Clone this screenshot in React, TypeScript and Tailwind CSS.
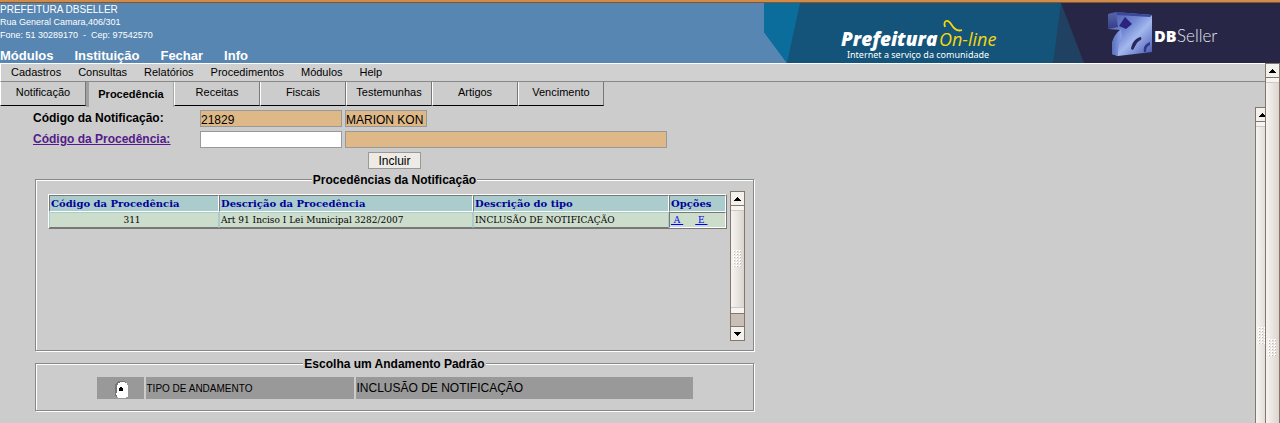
import React from "react";

const SANS = "font-['Liberation_Sans',Arial,sans-serif]";

const mainLinks = ["Módulos", "Instituição", "Fechar", "Info"];
const menuItems = ["Cadastros", "Consultas", "Relatórios", "Procedimentos", "Módulos", "Help"];
const tabs = ["Notificação", "Procedência", "Receitas", "Fiscais", "Testemunhas", "Artigos", "Vencimento"];

function Banner() {
  return (
    <svg className="block h-[60px] w-[516px] shrink-0" viewBox="0 0 516 60" role="img" aria-label="Prefeitura On-line, DBSeller">
      <defs>
        <linearGradient id="face" x1="0" y1="0" x2="1" y2="1">
          <stop offset="0" stopColor="#4453a6" />
          <stop offset="0.4" stopColor="#7289d2" />
          <stop offset="0.6" stopColor="#a3b8ee" />
          <stop offset="1" stopColor="#4355ad" />
        </linearGradient>
        <linearGradient id="side" x1="0" y1="0" x2="0" y2="1">
          <stop offset="0" stopColor="#5563ab" />
          <stop offset="1" stopColor="#343d85" />
        </linearGradient>
        <linearGradient id="foot" x1="0" y1="0" x2="1" y2="0">
          <stop offset="0" stopColor="#5a6fc0" />
          <stop offset="1" stopColor="#8ea4e4" />
        </linearGradient>
      </defs>
      <path d="M0 0H516V60H23L0 29Z" fill="#14547a" />
      <path d="M0 0H36L23 60L0 29Z" fill="#0a6d9c" />
      <path d="M297 0H516V60H289Z" fill="#204161" />
      <path d="M297 0H516V60H320Z" fill="#272646" />
      <text x="77" y="43" fontFamily="'Open Sans','Noto Sans',sans-serif" fontSize="19" fontWeight="800" fontStyle="italic" fill="#fff">Prefeitura</text>
      <text x="175" y="43" fontFamily="'Open Sans',sans-serif" fontSize="18" fontStyle="italic" fill="#f5d70c">On-line</text>
      <path d="M181 24C179 17 184 16 187 21C190 26 193 29 198 27" fill="none" stroke="#f5d70c" strokeWidth="1.8" />
      <text x="83" y="55" fontFamily="'Noto Sans',sans-serif" fontSize="9" fill="#fff">Internet a serviço da comunidade</text>
      <g>
        <path d="M344 11L352 9L388 12V49L354 53L348 51V40C349 35 352 30 356 27L344 26Z" fill="url(#face)" />
        <path d="M344 11L352 10L354 24L344 26Z" fill="url(#side)" />
        <path d="M352 9L388 12L386 14L353 12Z" fill="#3c489c" />
        <path d="M348 51V40C350 34 353 30 357 26L358 34C355 39 354 45 354 53Z" fill="url(#foot)" />
        <path d="M361 14L368 21L362 26L355 23Z" fill="#2c2280" />
        <path d="M367 46C368 40 371 35 377 34C378 36 377 37 375 38C372 40 371 44 369 47Z" fill="#28265e" />
        <path d="M380 49C379 44 381 41 386 39V42C383 43 382 46 382 49Z" fill="#33368c" />
      </g>
      <text x="390" y="39" fontFamily="'Open Sans',sans-serif" fontSize="16" fontWeight="800" fill="#fff">DB</text>
      <text x="413" y="39" fontFamily="Lato,sans-serif" fontSize="17" fontWeight="300" fill="#e6e6f0">Seller</text>
    </svg>
  );
}

function Grip() {
  const cells = Array.from({ length: 18 }, (_, i) => ({ x: (i % 3) * 3, y: Math.floor(i / 3) * 3 }));
  return (
    <svg className="h-[18px] w-[9px]" viewBox="0 0 9 18" aria-hidden="true" shapeRendering="crispEdges">
      {cells.map((c) => (
        <g key={c.x + "-" + c.y}>
          <rect x={c.x} y={c.y} width="2" height="2" fill="#fff" />
          <rect x={c.x + 1} y={c.y + 1} width="1" height="1" fill="#bdb8b2" />
        </g>
      ))}
    </svg>
  );
}

function ArrowButton({ down = false }: { down?: boolean }) {
  return (
    <button
      type="button"
      aria-label={down ? "Rolar para baixo" : "Rolar para cima"}
      className="flex h-[13px] w-full shrink-0 items-center justify-center bg-[#f3f1ee]"
    >
      <svg className="h-1 w-[7px]" viewBox="0 0 7 4" shapeRendering="crispEdges" aria-hidden="true">
        <path d={down ? "M0 0H7V1H6V2H5V3H4V4H3V3H2V2H1V1H0Z" : "M3 0H4V1H5V2H6V3H7V4H0V3H1V2H2V1H3Z"} fill="#000" />
      </svg>
    </button>
  );
}

function ScrollBar({ full = false, grip }: { full?: boolean; grip: string }) {
  return (
    <div
      className={
        "flex w-[15px] shrink-0 flex-col border-x border-t border-[#85766a] bg-[#c9bfb6] " +
        (full ? "" : "h-[150px] border-b")
      }
    >
      <ArrowButton />
      <div
        className={
          "flex flex-col border-t border-[#85766a] bg-gradient-to-r from-[#f6f4f2] to-[#dcd5cf] " +
          (full ? "flex-1" : "h-[109px] border-b")
        }
      >
        <div className="h-[5px] shrink-0 border-b border-[#cdc9c4] bg-[#f5f4f2]" />
        <div className={"flex flex-1 justify-center " + grip}>
          <Grip />
        </div>
        {!full && <div className="h-[6px] shrink-0 border-t border-[#cdc9c4] bg-[#f5f4f2]" />}
      </div>
      {!full && (
        <>
          <div className="flex-1" />
          <div className="border-t border-[#85766a]">
            <ArrowButton down />
          </div>
        </>
      )}
    </div>
  );
}

function Group({ title, className, children }: { title: string; className: string; children: React.ReactNode }) {
  return (
    <fieldset
      className={
        "w-[719px] border border-[#888] shadow-[1px_1px_0_#fff,inset_1px_1px_0_#fff] " + className
      }
    >
      <legend className="mx-auto bg-[#ccc] px-px pt-px text-[12px] leading-[12px] font-bold">{title}</legend>
      {children}
    </fieldset>
  );
}

const field = "h-[17px] border border-[#999] pt-0.5 text-[12px] leading-[13px] outline-none";
const th = "border border-t-[#777] border-l-[#777] border-r-white border-b-white bg-[#aacccc] px-px text-left";
const td = "border border-[#aacccc] border-b-[#777] bg-[#ccddcc] px-px";

export default function App() {
  return (
    <div className={"flex h-screen flex-col overflow-hidden bg-[#ccc] text-black " + SANS}>
      <div className="h-[3px] shrink-0 border-b border-[#80552f] bg-[#d18b48]" />
      <header className="flex shrink-0 justify-between bg-[#5786b2] text-white">
        <div className="flex h-[60px] flex-col justify-between">
          <address className="text-[9px] leading-[13px] whitespace-pre not-italic">
            <div className="text-[10px] leading-[13px]">PREFEITURA DBSELLER</div>
            <div>Rua General Camara,406/301</div>
            <div>Fone: 51 30289170{"  "}-{"  "}Cep: 97542570</div>
          </address>
          <nav className="flex gap-[21px] text-[13px] leading-[14px] font-bold">
            {mainLinks.map((l) => (
              <a key={l} href="#">
                {l}
              </a>
            ))}
          </nav>
        </div>
        <Banner />
      </header>

      <div className="flex min-h-0 flex-1">
        <div className="flex min-w-0 flex-1 flex-col">
          <nav className="flex h-[19px] shrink-0 gap-[17px] border-t border-b border-l border-t-white border-b-[#888] border-l-white bg-[#d0d0d0] pl-[10px] text-[11px] leading-[17px]">
            {menuItems.map((m) => (
              <a key={m} href="#">
                {m}
              </a>
            ))}
          </nav>

          <div className="flex h-[25px] shrink-0 items-start" role="tablist">
            {tabs.map((t) =>
              t === "Procedência" ? (
                <button
                  key={t}
                  type="button"
                  role="tab"
                  aria-selected="true"
                  className="h-[25px] w-[88px] border-r border-l-[3px] border-r-[#aaa] border-l-[#a0a0a0] text-[11px] font-bold"
                >
                  {t}
                </button>
              ) : (
                <button
                  key={t}
                  type="button"
                  role="tab"
                  aria-selected="false"
                  className="h-6 w-[86px] border-r border-b border-l border-r-[#777] border-b-black border-l-white pb-0.5 text-[11px]"
                >
                  {t}
                </button>
              ),
            )}
          </div>

          <div className="flex min-h-0 flex-1">
            <main className="min-w-0 flex-1 pt-[3px] pl-[33px]">
              <form className="grid gap-y-1" onSubmit={(e) => e.preventDefault()}>
                <div className="flex gap-[3px]">
                  <label htmlFor="notif" className="w-[164px] text-[12px] leading-[17px] font-bold">
                    Código da Notificação:
                  </label>
                  <input id="notif" className={field + " w-[142px] bg-[#deb887]"} defaultValue="21829" readOnly />
                  <input aria-label="Nome" className={field + " w-[82px] bg-[#deb887]"} defaultValue="MARION KON" readOnly />
                </div>
                <div className="flex gap-[3px]">
                  <label htmlFor="proc" className="w-[164px] text-[12px] leading-[17px] font-bold text-[#551a8b] underline">
                    <a href="#">Código da Procedência:</a>
                  </label>
                  <input id="proc" className={field + " w-[142px] bg-white"} />
                  <input aria-label="Descrição" className={field + " w-[322px] bg-[#deb887]"} readOnly />
                </div>
                <div className="flex w-[723px] justify-center">
                  <button type="submit" className="h-[17px] w-[53px] border border-[#999] bg-[#eeebe7] pt-0.5 text-[12px] leading-[13px]">
                    Incluir
                  </button>
                </div>
              </form>

              <Group title="Procedências da Notificação" className="mt-1 ml-[2px] h-[178px]">
                <div className="flex items-start gap-[3px] pt-[5px] pl-3">
                  <table className="mt-[3px] w-[679px] table-fixed border-separate border-spacing-0 border border-t-white border-r-[#777] border-b-[#777] border-l-white font-['DejaVu_Serif',serif] text-[10px] leading-[15px]">
                    <colgroup>
                      <col className="w-[170px]" />
                      <col className="w-[254px]" />
                      <col className="w-[196px]" />
                      <col />
                    </colgroup>
                    <thead className="text-[#000099]">
                      <tr>
                        <th className={th}>Código da Procedência</th>
                        <th className={th}>Descrição da Procedência</th>
                        <th className={th}>Descrição do tipo</th>
                        <th className={th}>Opções</th>
                      </tr>
                    </thead>
                    <tbody className="font-['DejaVu_Serif_Condensed','DejaVu_Serif',serif] leading-[14px]">
                      <tr>
                        <td className={td + " pr-[5px] text-center"}>311</td>
                        <td className={td}>Art 91 Inciso I Lei Municipal 3282/2007</td>
                        <td className={td}>INCLUSÃO DE NOTIFICAÇÃO</td>
                        <td className="border border-t-[#777] border-r-white border-b-white border-l-[#777] bg-[#ccddcc] px-px">
                          <div className="flex gap-3 whitespace-pre text-[#0000ff]">
                            <a className="underline" href="#">{" A "}</a>
                            <a className="underline" href="#">{" E "}</a>
                          </div>
                        </td>
                      </tr>
                    </tbody>
                  </table>
                  <ScrollBar grip="items-center" />
                </div>
              </Group>

              <Group title="Escolha um Andamento Padrão" className="mt-[6px] ml-[2px] h-[54px]">
                <table className="mx-auto mt-[7px] border-separate border-spacing-x-0.5 border-spacing-y-0 text-[10px]">
                  <tbody>
                    <tr className="h-[22px]">
                      <td className="w-[47px] bg-[#999] p-0">
                        <button type="button" aria-label="Selecionar andamento" className="ml-[18px] block pt-0.5">
                          <svg className="h-[17px] w-[13px]" viewBox="0 0 13 17" shapeRendering="crispEdges" aria-hidden="true">
                            <path d="M0 4L3 0H10L12 3V5H3V16H1L0 14Z" fill="#777" />
                            <path d="M3 2H5V1H10V2H12V4H13V16H11V17H3V16H2V14H1V12H2V4H3Z" fill="#fff" />
                            <path d="M5 6H7V7H8V10H4V7H5Z" fill="#000" />
                          </svg>
                        </button>
                      </td>
                      <td className="w-[208px] bg-[#999] p-0 pl-px">TIPO DE ANDAMENTO</td>
                      <td className="w-[337px] bg-[#999] p-0 pl-px text-[12px]">INCLUSÃO DE NOTIFICAÇÃO</td>
                    </tr>
                  </tbody>
                </table>
              </Group>
            </main>
            <div className="flex w-[10px] shrink-0 overflow-hidden">
              <ScrollBar full grip="pt-[200px]" />
            </div>
          </div>
        </div>
        <ScrollBar full grip="pt-[256px]" />
      </div>
    </div>
  );
}
